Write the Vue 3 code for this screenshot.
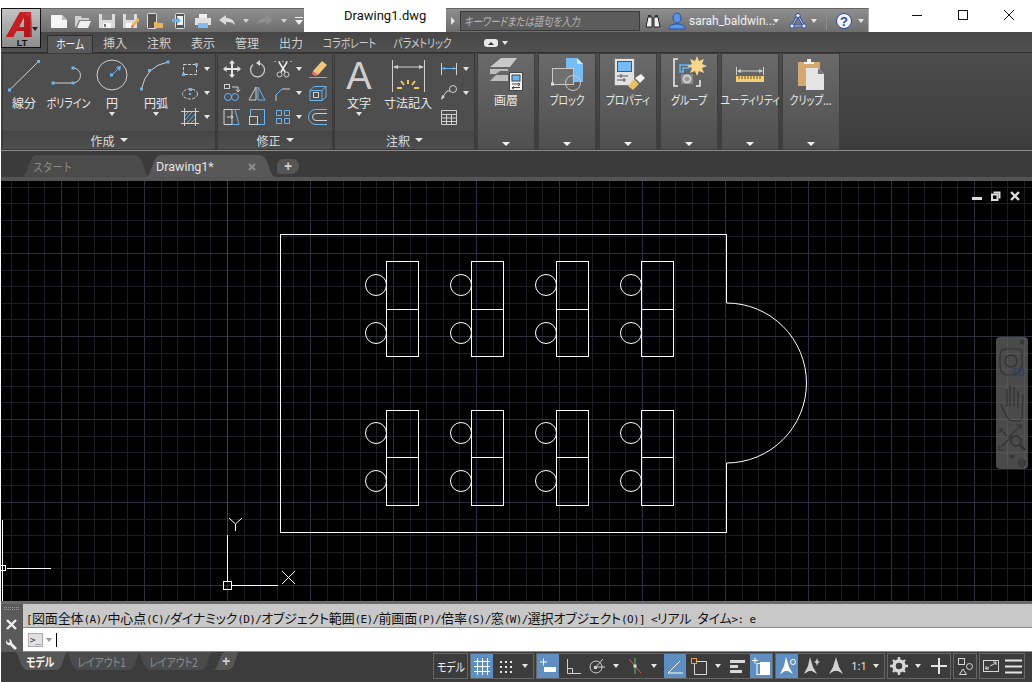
<script setup>
// Grille du canevas : origine du SCU en (227, 585), pas de 16,6 px
const STEP = 16.6
const gridX = []
for (let i = -13; 227.5 + i * STEP < 1033; i++) {
  gridX.push({ pos: Math.floor(227.5 + i * STEP) + 0.5, major: i % 5 === 0 })
}
const gridY = []
for (let i = -24; i < 2; i++) {
  gridY.push({ pos: Math.floor(585.5 + i * STEP) + 0.5, major: i % 5 === 0 })
}

// Tables et chaises du plan
const deskCols = [386.5, 471.5, 556.5, 641.5]
const deskRows = [
  { top: 261.5, mid: 309.5, bottom: 356.5, c1: 285, c2: 333 },
  { top: 410.5, mid: 457.5, bottom: 505.5, c1: 433, c2: 481 }
]

const tabs = ['挿入', '注釈', '表示', '管理', '出力']

// Historique : le latin et le japonais n'ont pas la même chasse
const history = '[図面全体(A)/中心点(C)/ダイナミック(D)/オブジェクト範囲(E)/前画面(P)/倍率(S)/窓(W)/選択オブジェクト(O)] <リアル タイム>: e'
const historyRuns = history.match(/[\x00-\x7f]+|[^\x00-\x7f]+/g).map((text) => ({
  text,
  latin: /^[\x00-\x7f]/.test(text)
}))
</script>

<template>
  <div class="app">
    <!-- Bouton application, par-dessus la barre d'onglets -->
    <div class="app-button">
      <svg width="38" height="38" viewBox="2 9 38 38">
        <defs>
          <linearGradient id="redA" x1="0" y1="0" x2="1" y2="1">
            <stop offset="0" stop-color="#d8262c" />
            <stop offset="1" stop-color="#a0161b" />
          </linearGradient>
        </defs>
        <path d="M6 37 L20 12 H31 L32 37 H24 V31 H16.500 L13 37 Z M19 27 H24 V17 Z" fill="url(#redA)" fill-rule="evenodd" />
        <path d="M20 12 L24 14 V17 L13 37 H6 Z" fill="#c41f25" />
        <path d="M24 14 L31 12 L32 37 H30 V17 Z" fill="#e2383c" opacity=".6" />
        <path d="M32 27 H38 L35 31 Z" fill="#222" />
        <text x="22" y="46" text-anchor="middle" class="lt">LT</text>
      </svg>
    </div>

    <header class="title-bar">
      <div class="qat">
        <svg class="qi" viewBox="0 0 16 16"><path d="M0 2H11L16 7V15H0Z" fill="#f4f4f4" /><path d="M11 2V7H16" fill="#bbb" /></svg>
        <svg class="qi" viewBox="0 0 16 16"><path d="M0 14V3H6L7 5H14V7H4L1 14Z" fill="#cfcfcf" /><path d="M2 15L5 8H16L13 15Z" fill="#f0f0f0" /></svg>
        <svg class="qi" viewBox="0 0 16 16"><path d="M0 1H16V15H0Z" fill="#dcdcdc" /><path d="M3 1H13V7H3Z" fill="#8d8d8d" /><path d="M4 10H12V15H4Z" fill="#f8f8f8" /><path d="M5 11H7V14H5Z" fill="#777" /></svg>
        <svg class="qi" viewBox="0 0 16 16"><path d="M0 1H14V15H0Z" fill="#dcdcdc" /><path d="M3 1H11V7H3Z" fill="#8d8d8d" /><path d="M3 10H9V15H3Z" fill="#f8f8f8" /><path d="M8 14L9 11L15 5L17 7L11 13Z" fill="#e8b45c" /><path d="M8 15L9 12L11 14Z" fill="#e2574c" /></svg>
        <svg class="qi" viewBox="0 0 16 16"><rect x="0.5" y="0.5" width="9" height="15" rx="1" fill="#555" stroke="#ddd" /><path d="M7 9H10L11 10H16V15H7Z" fill="#e8b45c" /></svg>
        <svg class="qi" viewBox="0 0 16 16"><rect x="4.5" y="0.5" width="9" height="15" rx="1" fill="#555" stroke="#ddd" /><rect x="6" y="3" width="6" height="9" fill="#f0f0f0" /><path d="M1 6H6V4L10 7.5L6 11V9H1Z" fill="#63b5f0" /></svg>
        <svg class="qi" viewBox="0 0 16 16"><path d="M4 1H12V5H4Z" fill="#f0f0f0" /><path d="M0 5H16V12H13V10H3V12H0Z" fill="#e0e0e0" /><path d="M3 10H13V15H3Z" fill="#7fbdf0" /></svg>
        <svg class="qi" viewBox="0 0 16 16"><path d="M0 7L7 2V5C12 5 15 7 16 12C13 9 11 9 7 9V12Z" fill="#dcdcdc" /></svg>
        <i class="caret cq"></i>
        <svg class="qi" viewBox="0 0 16 16"><path d="M16 7L9 2V5C4 5 1 7 0 12C3 9 5 9 9 9V12Z" fill="#8e8e8e" /></svg>
        <i class="caret cq"></i>
        <svg class="qc" width="8" height="10" viewBox="0 0 8 10"><path d="M0 1H8V2H0ZM0 4H8L4 9Z" fill="#eee" /></svg>
      </div>

      <div class="doc-title">Drawing1.dwg</div>

      <div class="search-bar">
        <span class="search-arrow"></span>
        <div class="search-input"><span class="nk-left slim">キーワードまたは語句を入力</span></div>
        <svg class="binoc" width="16" height="16" viewBox="0 0 16 16"><path d="M1 14L3 4H7V14ZM9 14V4H13L15 14Z" fill="#f2f2f2" stroke="#222" /><path d="M3 2H6V4H3ZM10 2H13V4H10Z" fill="#333" /></svg>
        <svg class="user" width="18" height="18" viewBox="0 0 18 18"><ellipse cx="9" cy="6" rx="4" ry="5" fill="#5b95e8" stroke="#2b4f9e" /><path d="M1 17C1 13 5 12 9 12S17 13 17 17Z" fill="#5b95e8" stroke="#2b4f9e" /></svg>
        <span class="user-name">sarah_baldwin...</span>
        <i class="caret"></i>
        <svg class="net" width="18" height="18" viewBox="0 0 18 18">
          <path d="M9 3.500L15 14H3Z" fill="none" stroke="#2d4a9e" stroke-width="2.600" />
          <path d="M9 3.500L15 14H3Z" fill="none" stroke="#dfe6fa" stroke-width="0.900" />
          <circle cx="9" cy="3.500" r="2.200" fill="#dfe6fa" stroke="#2d4a9e" />
          <circle cx="15" cy="14" r="2.200" fill="#dfe6fa" stroke="#2d4a9e" />
          <circle cx="3" cy="14" r="2.200" fill="#dfe6fa" stroke="#2d4a9e" />
        </svg>
        <i class="caret c-net"></i>
        <span class="bar-sep"></span>
        <svg class="help" width="16" height="16" viewBox="0 0 16 16"><circle cx="8" cy="8" r="7.500" fill="#f2f4fa" stroke="#2d4a9e" /><text x="8" y="12.500" text-anchor="middle" class="help-q">?</text></svg>
        <i class="caret"></i>
      </div>

      <div class="win-controls">
        <button class="win-btn"><svg width="10" height="10" viewBox="0 0 10 10"><path d="M0 5.500H10" stroke="#111" /></svg></button>
        <button class="win-btn"><svg width="10" height="10" viewBox="0 0 10 10"><rect x=".5" y=".5" width="9" height="9" fill="none" stroke="#111" /></svg></button>
        <button class="win-btn"><svg width="10" height="10" viewBox="0 0 10 10"><path d="M0 0L10 10M10 0L0 10" stroke="#111" /></svg></button>
      </div>
    </header>

    <nav class="ribbon-tabs">
      <span class="rtab active"><span class="nk">ホーム</span></span>
      <span v-for="tab in tabs" :key="tab" class="rtab">{{ tab }}</span>
      <span class="rtab wide"><span class="nk">コラボレート</span></span>
      <span class="rtab wider"><span class="nk">パラメトリック</span></span>
      <span class="pill"><i class="pill-up"></i></span>
      <i class="caret"></i>
    </nav>

    <section class="ribbon">
      <!-- Panneau Création -->
      <div class="panel p-draw">
        <div class="panel-body">
          <div class="tool w44">
            <svg width="44" height="40" viewBox="2 56 44 40">
              <path d="M9.500 90L38.500 61.500" class="ln" />
              <rect x="8" y="88.500" width="3" height="3" class="grip" /><rect x="37" y="60" width="3" height="3" class="grip" />
            </svg>
            <span class="label">線分</span>
          </div>
          <div class="tool w44">
            <svg width="44" height="40" viewBox="46 56 44 40">
              <path d="M53 83H73A7.500 7.500 0 0 0 73 68" class="ln" />
              <rect x="51.500" y="81.500" width="3" height="3" class="grip" /><rect x="71.500" y="81.500" width="3" height="3" class="grip" /><rect x="71.500" y="66.500" width="3" height="3" class="grip" />
            </svg>
            <span class="label nk">ポリライン</span>
          </div>
          <div class="tool w44">
            <svg width="44" height="40" viewBox="90 56 44 40">
              <circle cx="112" cy="75" r="15" class="ln" />
              <path d="M112 75L120 67" stroke="#6ab4ef" fill="none" /><path d="M121 66L116 67L120 71Z" fill="#6ab4ef" />
              <rect x="110" y="73.500" width="3" height="3" class="grip" />
            </svg>
            <span class="label">円</span>
            <i class="caret tool-caret"></i>
          </div>
          <div class="tool w44">
            <svg width="44" height="40" viewBox="134 56 44 40">
              <path d="M141.500 89Q146 66 168 62" class="ln" />
              <rect x="140" y="87.500" width="3" height="3" class="grip" /><rect x="148" y="69" width="3" height="3" class="grip" /><rect x="166.500" y="60.500" width="3" height="3" class="grip" />
            </svg>
            <span class="label">円弧</span>
            <i class="caret tool-caret"></i>
          </div>
          <div class="small-col">
            <div class="small-row">
              <svg class="si" viewBox="0 0 20 20"><rect x="3.500" y="5.500" width="13" height="10" class="ln dash" /><rect x="2" y="14" width="3" height="3" class="grip" /><rect x="15" y="4" width="3" height="3" class="grip" /></svg>
              <i class="caret"></i>
            </div>
            <div class="small-row">
              <svg class="si" viewBox="0 0 20 20"><ellipse cx="10" cy="11" rx="7.500" ry="5" class="ln dash" /><rect x="9" y="5" width="3" height="3" class="grip" /><rect x="9" y="10" width="2" height="2" class="grip" /></svg>
              <i class="caret"></i>
            </div>
            <div class="small-row">
              <svg class="si" viewBox="0 0 20 20"><path d="M1 4.500H19M1 16.500H19M4.500 1V19M15.500 1V19" class="ln" /><path d="M5 13L12 5M7 16L15 7M11 16L15 12M5 9L8 5" stroke="#6ab4ef" fill="none" /></svg>
              <i class="caret"></i>
            </div>
          </div>
        </div>
        <div class="panel-title"><span>作成</span><i class="caret title-caret"></i></div>
      </div>

      <!-- Panneau Modification -->
      <div class="panel p-modify">
        <div class="panel-body modify-grid">
          <svg class="si" viewBox="0 0 20 20"><path d="M10 1L13 4.500H11V9H15.500V7L19 10L15.500 13V11H11V15.500H13L10 19L7 15.500H9V11H4.500V13L1 10L4.500 7V9H9V4.500H7Z" fill="#e4e4e4" /></svg>
          <svg class="si" viewBox="0 0 20 20"><path d="M6 5.500A7 7 0 1 0 12 4" class="ln" stroke-width="1.200" /><path d="M13 1L9 4L13 7Z" fill="#dcdcdc" /></svg>
          <div class="mcell">
            <svg class="si" viewBox="0 0 20 20"><path d="M1 2.500H19" stroke="#6ab4ef" stroke-dasharray="2 2" /><path d="M6 3L12 13M14 3L8 13" stroke="#e8e8e8" stroke-width="1.600" /><circle cx="6.500" cy="15.500" r="2.500" class="ln" /><circle cx="13.500" cy="15.500" r="2.500" class="ln" /></svg>
            <i class="caret"></i>
          </div>
          <svg class="si" viewBox="0 0 20 20"><path d="M5 12L14 2L19 6L10 16L6 16Z" fill="#f2c57a" /><path d="M5 12L10 16L7 17L4 15Z" fill="#e8706a" /><path d="M1 18.500H19" stroke="#6ab4ef" /></svg>

          <svg class="si" viewBox="0 0 20 20"><rect x="2.500" y="1.500" width="5" height="4" class="ln" /><path d="M10 4H16V8M14 6.500L16 9L18 6.500" class="ln" /><circle cx="6" cy="14" r="3.500" stroke="#6ab4ef" fill="none" /><circle cx="13" cy="14" r="3.500" stroke="#6ab4ef" fill="none" /></svg>
          <svg class="si" viewBox="0 0 20 20"><path d="M9 4V17H2Z" class="ln" /><path d="M11 4V17H18Z" stroke="#6ab4ef" fill="none" /></svg>
          <div class="mcell">
            <svg class="si" viewBox="0 0 20 20"><path d="M3 18V12L9 6H17" class="ln" /><path d="M3 12L9 6" stroke="#6ab4ef" /></svg>
            <i class="caret"></i>
          </div>
          <svg class="si" viewBox="0 0 20 20"><path d="M2 7.500L6 3.500H18V14L14 17.500H2Z M14 7.500V17.500 M2 7.500H14 M14 7.500L18 3.500" stroke="#6ab4ef" fill="none" /><rect x="5.500" y="9.500" width="5" height="5" class="ln" /></svg>

          <svg class="si" viewBox="0 0 20 20"><path d="M2 2.500H10V17.500H2Z" class="ln" /><path d="M10 2.500L18 2.500M13 2.500L17 17.500H10" stroke="#6ab4ef" fill="none" /><path d="M5 10H11M9 8L11 10L9 12" class="ln" /></svg>
          <svg class="si" viewBox="0 0 20 20"><path d="M3.500 9.500V2.500H17.500V17.500H10.500" stroke="#6ab4ef" fill="none" /><rect x="2.500" y="9.500" width="8" height="8" class="ln" /></svg>
          <div class="mcell">
            <svg class="si" viewBox="0 0 20 20"><path d="M3.500 3.500H8.500V8.500H3.500ZM11.500 3.500H16.500V8.500H11.500ZM3.500 11.500H8.500V16.500H3.500ZM11.500 11.500H16.500V16.500H11.500Z" stroke="#6ab4ef" fill="none" /></svg>
            <i class="caret"></i>
          </div>
          <svg class="si" viewBox="0 0 20 20"><path d="M19 2.500H8A5 5 0 0 0 8 17.500H19" stroke="#6ab4ef" fill="none" /><path d="M19 6.500H8A3 3 0 0 0 8 13.500H19" class="ln" /></svg>
        </div>
        <div class="panel-title"><span>修正</span><i class="caret title-caret"></i></div>
      </div>

      <!-- Panneau Annotation -->
      <div class="panel p-annot">
        <div class="panel-body">
          <div class="tool w50">
            <div class="big-a">A</div>
            <span class="label">文字</span>
            <i class="caret tool-caret"></i>
          </div>
          <div class="tool w48">
            <svg width="48" height="40" viewBox="0 0 48 40">
              <path d="M8.500 4V36M40.500 4V36M10 11H39" class="ln" />
              <path d="M9 11L14 9V13ZM40 11L35 9V13Z" fill="#d0d0d0" />
              <path d="M24 24V28M17 25L20 29M31 25L28 29M13 32H18M30 32H35" stroke="#f0c860" stroke-width="2" />
            </svg>
            <span class="label">寸法記入</span>
          </div>
          <div class="small-col annot-col">
            <div class="small-row">
              <svg class="si" viewBox="0 0 20 20"><path d="M2.500 4V16M17.500 4V16" class="ln" /><path d="M3 9.500H17" stroke="#6ab4ef" /><path d="M3 9.500L6 8V11ZM17 9.500L14 8V11Z" fill="#6ab4ef" /></svg>
              <i class="caret"></i>
            </div>
            <div class="small-row">
              <svg class="si" viewBox="0 0 20 20"><circle cx="14" cy="6" r="3.500" class="ln" /><path d="M11 8H8L3 15" class="ln" /><path d="M2 17L3 12L6 14Z" fill="#d0d0d0" /></svg>
              <i class="caret"></i>
            </div>
            <div class="small-row">
              <svg class="si" viewBox="0 0 20 20"><path d="M2.500 3.500H17.500V17.500H2.500ZM2.500 7.500H17.500M2.500 11H17.500M2.500 14.500H17.500M7.500 7.500V17.500M12.500 7.500V17.500" class="ln" /></svg>
            </div>
          </div>
        </div>
        <div class="panel-title"><span>注釈</span><i class="caret title-caret"></i></div>
      </div>

      <!-- Panneaux réduits -->
      <div class="mini">
        <svg class="mi" viewBox="0 0 40 36">
          <path d="M15 2H31L24 11H4Z" fill="#c9c9c9" /><path d="M4 13H22V15H14L10 18H4Z" fill="#bcbcbc" /><path d="M10 19H22V25H4Z" fill="#bcbcbc" />
          <rect x="23.500" y="16.500" width="13" height="18" fill="#f2f2f2" stroke="#444" /><rect x="26" y="19" width="8" height="6" fill="#67b5f2" stroke="#444" />
          <path d="M26 28H34M32 27L34 28.500L32 30M34 31.500H26M28 30.500L26 32L28 33" stroke="#444" fill="none" />
        </svg>
        <span class="label">画層</span>
        <i class="caret mini-caret"></i>
      </div>
      <div class="mini">
        <svg class="mi" viewBox="0 0 40 36">
          <path d="M19 2H30L36 8V26H19Z" fill="#76bdf6" /><path d="M30 2V8H36Z" fill="#cfe7fb" />
          <rect x="5.500" y="12.500" width="21" height="16" fill="#707070" stroke="#c8c8c8" />
          <circle cx="26" cy="27" r="7.500" fill="none" stroke="#c8c8c8" />
          <rect x="4" y="26.500" width="3" height="3" fill="#ddd" />
        </svg>
        <span class="label nk">ブロック</span>
        <i class="caret mini-caret"></i>
      </div>
      <div class="mini">
        <svg class="mi" viewBox="0 0 40 36">
          <rect x="6.500" y="2.500" width="20" height="27" fill="#e2e2e2" stroke="#777" />
          <rect x="9.500" y="5.500" width="14" height="10" fill="#74bcf6" stroke="#555" />
          <path d="M9 20H20M9 24H18M13 18V22M16 22V26" stroke="#555" fill="none" />
          <path d="M20 30L26 23L31 28L25 34Z" fill="#e9c264" /><path d="M27 22L33 18L37 22L32 27Z" fill="#f2f2f2" />
        </svg>
        <span class="label nk">プロパティ</span>
        <i class="caret mini-caret"></i>
      </div>
      <div class="mini">
        <svg class="mi" viewBox="0 0 40 36">
          <path d="M9 3H5V30H9M27 30H31V24" fill="none" stroke="#f0f0f0" stroke-width="1.500" />
          <path d="M11 9H20V12H14V16H11Z" fill="none" stroke="#63b5f0" stroke-width="1.500" />
          <rect x="12" y="18" width="12" height="10" fill="#888" /><circle cx="18" cy="23" r="3.500" fill="#9a9a9a" stroke="#cfcfcf" stroke-width="2" />
          <path d="M28 0L30 5L35 3L33 8L38 10L33 12L35 17L30 15L28 20L26 15L21 17L23 12L18 10L23 8L21 3L26 5Z" fill="#f5d78c" />
        </svg>
        <span class="label nk">グループ</span>
        <i class="caret mini-caret"></i>
      </div>
      <div class="mini">
        <svg class="mi" viewBox="0 0 40 36">
          <path d="M6.500 11V19M33.500 11V19M8 15H32" stroke="#d0d0d0" fill="none" />
          <path d="M7 15L11 13V17ZM33 15L29 13V17Z" fill="#d0d0d0" />
          <rect x="6" y="20" width="28" height="6" fill="#f3cf78" />
          <path d="M9 20V23M12 20V23M15 20V23M18 20V23M21 20V23M24 20V23M27 20V23M30 20V23" stroke="#6e5a24" />
        </svg>
        <span class="label nk">ユーティリティ</span>
        <i class="caret mini-caret"></i>
      </div>
      <div class="mini">
        <svg class="mi" viewBox="0 0 40 36">
          <rect x="7" y="6" width="22" height="24" fill="#d5a871" />
          <path d="M13 6H16V3H20V6H23V8H13Z" fill="#f0f0f0" />
          <path d="M15 12H27L33 18V34H15Z" fill="#e4e4e4" /><path d="M27 12L33 18H27Z" fill="#777" />
        </svg>
        <span class="label nk">クリップ...</span>
        <i class="caret mini-caret"></i>
      </div>
    </section>

    <!-- Onglets de documents -->
    <div class="doc-tabs">
      <div class="doc-tab start">
        <svg class="tab-shape" width="128" height="22" viewBox="0 0 128 22"><path d="M0 22C6 22 6 0 15 0H113C122 0 122 22 128 22Z" fill="#4b4b4b" /></svg>
        <span class="doc-label dim"><span class="nk-left">スタート</span></span>
      </div>
      <div class="doc-tab current">
        <svg class="tab-shape" width="130" height="22" viewBox="0 0 130 22"><path d="M0 22C6 22 6 0 15 0H113C124 0 122 22 130 22Z" fill="#585858" /></svg>
        <span class="doc-label">Drawing1*</span>
        <svg class="doc-close" width="8" height="8" viewBox="0 0 8 8"><path d="M1 1L7 7M7 1L1 7" stroke="#8e8e8e" stroke-width="2" /></svg>
      </div>
      <div class="doc-plus">+</div>
    </div>

    <!-- Zone de dessin -->
    <main class="canvas">
      <svg class="drawing" width="1031" height="420" viewBox="1 181 1031 420">
        <g shape-rendering="crispEdges">
          <path v-for="g in gridX" :key="'x' + g.pos" :d="`M${g.pos} 181V601`" :stroke="g.major ? '#2e2e42' : '#1d1d24'" />
          <path v-for="g in gridY" :key="'y' + g.pos" :d="`M1 ${g.pos}H1033`" :stroke="g.major ? '#2e2e42' : '#1d1d24'" />
          <path d="M227.500 181V535" stroke="#1f5c1f" />
          <path d="M278 585.500H1033" stroke="#5c1f1f" />
          <path d="M227.500 535V581M232 585.500H278" stroke="#fff" />
          <rect x="223.500" y="581.500" width="8" height="8" fill="none" stroke="#fff" />
          <path d="M2.500 520V601M7 568.500H51" stroke="#fff" />
          <rect x="0.500" y="565.500" width="5" height="5" fill="none" stroke="#fff" />
        </g>
        <g fill="none" stroke="#fff">
          <path d="M229 518L235.500 524L242 518M235.500 524V531" />
          <path d="M282 571L295 584M295 571L282 584" />
          <path d="M726.500 303V234.500H280.500V532.500H726.500V463" shape-rendering="crispEdges" />
          <path d="M726.500 303A80 80 0 0 1 726.500 463" />
          <g v-for="row in deskRows" :key="row.top">
            <g v-for="x in deskCols" :key="x">
              <path :d="`M${x} ${row.top}H${x + 32}V${row.bottom}H${x}ZM${x} ${row.mid}H${x + 32}`" shape-rendering="crispEdges" />
              <circle :cx="x - 10.5" :cy="row.c1" r="10.500" />
              <circle :cx="x - 10.5" :cy="row.c2" r="10.500" />
            </g>
          </g>
        </g>
      </svg>

      <div class="vp-controls">
        <svg width="10" height="10" viewBox="0 0 10 10"><rect x="0" y="6" width="10" height="3" fill="#ddd" /></svg>
        <svg width="10" height="10" viewBox="0 0 10 10"><path d="M2.500 .5H9.500V7.500H7.500V2.500H2.500Z" fill="#ddd" /><rect x="1" y="3.500" width="5.500" height="5.500" fill="none" stroke="#ddd" stroke-width="2" /></svg>
        <svg width="10" height="10" viewBox="0 0 10 10"><path d="M1 1L9 9M9 1L1 9" stroke="#ddd" stroke-width="2.400" /></svg>
      </div>

      <div class="nav-bar">
        <svg width="32" height="132" viewBox="0 0 32 132">
          <g fill="none" stroke="#333">
            <path d="M24 3L28 7M28 3L24 7" stroke-width="1.500" />
            <path d="M10 12H22A4 4 0 0 1 26 16V28A10 10 0 0 1 16 38H12A8 8 0 0 1 4 30V18A6 6 0 0 1 10 12Z" stroke-width="1.200" />
            <circle cx="15" cy="24" r="6" stroke-width="1.200" />
            <path d="M9 76C6 72 7 70 5 67M11 70V52M14 69V48M18 69V50M22 71V54M26 70C27 66 27 62 27 58M9 76C12 83 14 84 18 84H23C26 84 27 78 26 70" stroke-width="1.200" />
            <path d="M5 93L11 99M13 100L24 89M5 110L16 99M8 92H4V96M20 88H25V92M3 108V113H8" stroke-width="1.200" />
            <circle cx="20" cy="104" r="5" stroke-width="1.500" />
            <path d="M24 108L29 113" stroke-width="2.500" />
            <circle cx="26" cy="126" r="3.500" />
            <path d="M23 125H29M23 127H29" />
          </g>
          <path d="M13 118H19L16 122Z" fill="#333" />
          <text x="22" y="39" text-anchor="middle" class="two-d">2D</text>
        </svg>
      </div>
    </main>

    <!-- Ligne de commande -->
    <section class="command">
      <div class="cmd-side">
        <svg width="21" height="48" viewBox="0 0 21 48">
          <path d="M3 3.500H18M3 5.500H18" stroke="#9a9a9a" stroke-dasharray="1 1" fill="none" />
          <path d="M6 16L15 25M15 16L6 25" stroke="#f0f0f0" stroke-width="2.400" />
          <path d="M5 38A3 3 0 0 0 9 41L14 46L16 44L11 39A4 4 0 0 0 8 35L9 38L7 39L5 36Z" fill="#f0f0f0" />
        </svg>
      </div>
      <div class="cmd-main">
        <div class="cmd-history">
          <span v-for="(run, i) in historyRuns" :key="i" :class="run.latin ? 'run-latin' : 'run-cjk'">{{ run.text }}</span>
        </div>
        <div class="cmd-input">
          <span class="cmd-icon">&gt;_</span>
          <i class="caret ci"></i>
          <span class="cursor"></span>
        </div>
      </div>
    </section>

    <!-- Barre d'état -->
    <footer class="status">
      <div class="layout-tabs">
        <div class="ltab first">
          <svg class="tab-shape" width="52" height="18" viewBox="0 0 52 18"><path d="M0 0C4 0 5 18 12 18H42C48 18 48 4 52 0Z" fill="#565656" /></svg>
          <span class="ltab-label on nk">モデル</span>
        </div>
        <div class="ltab">
          <svg class="tab-shape" width="74" height="18" viewBox="0 0 74 18"><path d="M0 0C4 0 5 18 12 18H62C70 18 70 4 74 0Z" fill="#4b4b4b" /></svg>
          <span class="ltab-label nk">レイアウト1</span>
        </div>
        <div class="ltab">
          <svg class="tab-shape" width="74" height="18" viewBox="0 0 74 18"><path d="M0 0C4 0 5 18 12 18H62C70 18 70 4 74 0Z" fill="#4b4b4b" /></svg>
          <span class="ltab-label nk">レイアウト2</span>
        </div>
        <div class="ltab plus">
          <svg class="tab-shape" width="24" height="18" viewBox="0 0 24 18"><path d="M0 18C5 16 5 0 12 0H24C21 6 22 18 12 18Z" fill="#565656" /></svg>
          <span class="ltab-label plus-sign">+</span>
        </div>
      </div>

      <div class="sgroup sg-model"><span class="model-text nk">モデル</span></div>

      <div class="sgroup">
        <span class="sb blue"><svg viewBox="0 0 22 24"><path d="M3 7.500H19M3 12.500H19M3 17.500H19M6.500 4V21M11.500 4V21M16.500 4V21" stroke="#fff" fill="none" /></svg></span>
        <span class="sb s2"><svg viewBox="0 0 22 24"><path d="M5 7H7V9H5ZM10 7H12V9H10ZM15 7H17V9H15ZM5 12H7V14H5ZM10 12H12V14H10ZM15 12H17V14H15ZM5 17H7V19H5ZM10 17H12V19H10ZM15 17H17V19H15Z" fill="#e4e4e4" /></svg></span>
        <span class="sc"><i class="caret"></i></span>
      </div>

      <div class="sgroup">
        <span class="sb blue"><svg viewBox="0 0 22 24"><path d="M3 8H10M6.500 4.500V11.500" stroke="#fff" /><rect x="7" y="13" width="12" height="5" fill="#fff" /></svg></span>
        <span class="sb s3"><svg viewBox="0 0 22 24"><path d="M5.500 5V19.500H19M5.500 14.500H10.500V19.500" stroke="#cfcfcf" fill="none" /></svg></span>
        <span class="sb s2"><svg viewBox="0 0 22 24"><circle cx="10" cy="13" r="6" fill="none" stroke="#cfcfcf" /><path d="M9 14L17 5M10 13H19" stroke="#cfcfcf" /><rect x="8" y="12" width="3" height="3" fill="#cfcfcf" /></svg></span>
        <span class="sc"><i class="caret"></i></span>
        <span class="sb"><svg viewBox="0 0 22 24"><path d="M5 5L17 19" stroke="#d86060" /><path d="M11 4V20" stroke="#5ac85a" /><rect x="9.500" y="10.500" width="3" height="3" fill="#ddd" /></svg></span>
        <span class="sc"><i class="caret"></i></span>
        <span class="sb blue s2"><svg viewBox="0 0 22 24"><path d="M4 19L16 7M4 19H19" stroke="#fff" fill="none" /></svg></span>
        <span class="sb s2"><svg viewBox="0 0 22 24"><rect x="3.500" y="4.500" width="5" height="5" fill="none" stroke="#e8a050" /><path d="M9 7.500H18.500V20.500H6.500V10" stroke="#d8d8d8" fill="none" /></svg></span>
        <span class="sc"><i class="caret"></i></span>
        <span class="sb"><svg viewBox="0 0 22 24"><path d="M4 6H19V9H4ZM4 11H12V14H4ZM4 16H16V19H4Z" fill="#d8d8d8" /></svg></span>
        <span class="sb blue s2"><svg viewBox="0 0 22 24"><path d="M5 3.500V9.500M2 6.500H8" stroke="#fff" /><rect x="7" y="9.500" width="10" height="11" fill="none" stroke="#fff" /><rect x="10" y="8" width="10" height="13" fill="#fff" /></svg></span>
      </div>

      <div class="sgroup">
        <span class="sb blue"><svg viewBox="0 0 22 24"><path d="M10 3L13 13L17 20L12 17H9L4 20L8 12Z" fill="#fff" /><circle cx="17" cy="8" r="2.500" fill="none" stroke="#fff" /></svg></span>
        <span class="sb s2"><svg viewBox="0 0 22 24"><path d="M10 3L13 13L17 20L12 17H9L4 20L8 12Z" fill="#d0d0d0" /><path d="M17 4L18 7L20 8L18 9L17 12L16 9L14 8L16 7Z" fill="#d0d0d0" /></svg></span>
        <span class="sb s3"><svg viewBox="0 0 22 24"><path d="M11 3L14 13L18 20L13 17H9L4 20L8 13Z" fill="#d0d0d0" /></svg></span>
        <span class="scale">1:1</span>
        <span class="sc"><i class="caret"></i></span>
      </div>

      <div class="sgroup">
        <span class="sb"><svg viewBox="0 0 22 24"><circle cx="11" cy="12" r="5" fill="none" stroke="#d8d8d8" stroke-width="3.500" /><path d="M11 3V7M11 17V21M2 12H6M16 12H20M5 6L8 9M14 15L17 18M17 6L14 9M8 15L5 18" stroke="#d8d8d8" stroke-width="2.400" /></svg></span>
        <span class="sc"><i class="caret"></i></span>
        <span class="sb s2"><svg viewBox="0 0 22 24"><path d="M3 12H19M11 4V20" stroke="#e4e4e4" stroke-width="2" /></svg></span>
      </div>

      <div class="sgroup">
        <span class="sb"><svg viewBox="0 0 22 24"><rect x="4.500" y="4.500" width="6" height="6" fill="none" stroke="#d8d8d8" /><circle cx="15.500" cy="12.500" r="3" fill="none" stroke="#d8d8d8" /><path d="M9 15L12.500 20.500H5.500Z" fill="none" stroke="#d8d8d8" /></svg></span>
      </div>

      <div class="sgroup">
        <span class="sb"><svg viewBox="0 0 22 24"><rect x="3.500" y="6.500" width="15" height="11" fill="none" stroke="#d8d8d8" /><path d="M10 12L16 9M5 15L9 13M13 8H16V11M6 12V15H9" stroke="#d8d8d8" fill="none" /></svg></span>
        <span class="sb"><svg viewBox="0 0 22 24"><path d="M3 6.500H20M3 12.500H20M3 18.500H20" stroke="#e4e4e4" stroke-width="2" /></svg></span>
      </div>
    </footer>
  </div>
</template>

<style>
html, body {
  margin: 0;
  background: #fff;
}
</style>

<style scoped>
.app {
  width: 1033px;
  height: 682px;
  padding: 0 1px;
  box-sizing: border-box;
  background: #fff;
  position: relative;
  overflow: hidden;
  font-family: "Noto Sans CJK JP", sans-serif;
  font-feature-settings: "palt";
  font-size: 12px;
}

i { display: block; }

/* Le kana de la capture est étroit : on resserre le texte horizontalement */
.nk {
  display: inline-block;
  transform: scaleX(0.82);
}
.nk-left {
  display: inline-block;
  transform: scaleX(0.82);
  transform-origin: left center;
  white-space: nowrap;
}
.nk-left.slim { transform: scaleX(0.78); }

.caret {
  width: 0;
  height: 0;
  border-left: 3.5px solid transparent;
  border-right: 3.5px solid transparent;
  border-top: 4px solid #e6e6e6;
  flex: none;
}

/* Bouton application */
.app-button {
  position: absolute;
  left: 1px;
  top: 8px;
  width: 40px;
  height: 40px;
  box-sizing: border-box;
  border: 1px solid #111;
  background: linear-gradient(#c4c4c4, #8c8c8c);
  z-index: 2;
}
.app-button svg { display: block; }
.lt {
  font: bold 9px "Liberation Sans", sans-serif;
  fill: #111;
}

/* Barre de titre */
.title-bar {
  display: flex;
  height: 32px;
  background: #fff;
}
.qat {
  margin: 8px 0 0 40px;
  width: 263px;
  height: 24px;
  box-sizing: border-box;
  padding-left: 10px;
  display: flex;
  align-items: center;
  gap: 8px;
  background: linear-gradient(#8f8f8f, #6d6d6d);
  border-top: 1px solid #666;
}
.qi { width: 16px; height: 16px; flex: none; }
.qc { flex: none; }
.cq { border-top-color: #cfcfcf; border-left-width: 3px; border-right-width: 3px; }

.doc-title {
  margin-left: 40px;
  width: 102px;
  flex: none;
  color: #111;
  font: 13px/32px Roboto, sans-serif;
}

.search-bar {
  margin-top: 8px;
  width: 423px;
  height: 24px;
  flex: none;
  box-sizing: border-box;
  display: flex;
  align-items: center;
  background: linear-gradient(#8f8f8f, #6d6d6d);
  border-top: 1px solid #666;
  border-right: 1px solid #aaa;
}
.search-bar > * { flex: none; }
.search-arrow {
  width: 0;
  height: 0;
  margin: 0 5px 0 5px;
  border-top: 4px solid transparent;
  border-bottom: 4px solid transparent;
  border-left: 4px solid #e4e4e4;
}
.search-input {
  width: 180px;
  height: 20px;
  box-sizing: border-box;
  border: 1px solid #3a3a3a;
  background: #5c5c5c;
  color: #b4b4b4;
  font-style: italic;
  line-height: 18px;
  padding-left: 3px;
  font-size: 12px;
  overflow: hidden;
}
.binoc { margin-left: 5px; }
.user { margin-left: 7px; }
.user-name {
  margin-left: 3px;
  width: 84px;
  color: #f0f0f0;
  font: 12px Roboto, sans-serif;
  white-space: nowrap;
}
.net { margin-left: 10px; }
.c-net { margin-left: 4px; }
.bar-sep {
  width: 1px;
  height: 18px;
  background: #8f8f8f;
  margin: 0 9px 0 9px;
}
.help { margin-right: 6px; }
.help-q {
  font: bold 13px "Liberation Sans", sans-serif;
  fill: #2d4a9e;
}

.win-controls {
  margin-left: auto;
  display: flex;
}
.win-btn {
  width: 46px;
  height: 30px;
  border: 0;
  padding: 0;
  background: none;
  display: flex;
  align-items: center;
  justify-content: center;
}

/* Onglets du ruban */
.ribbon-tabs {
  height: 20px;
  display: flex;
  align-items: flex-end;
  padding-left: 46px;
  background: linear-gradient(#474747, #505050);
  border-bottom: 1px solid #2f2f2f;
}
.rtab {
  width: 44px;
  height: 17px;
  line-height: 16px;
  text-align: center;
  color: #cfcfcf;
  white-space: nowrap;
  font-size: 12px;
}
.rtab.active {
  width: 46px;
  box-sizing: border-box;
  background: #585858;
  color: #f2f2f2;
  border: 1px solid #2f2f2f;
  border-bottom: 0;
  margin-bottom: -1px;
  height: 18px;
}
.rtab.wide { width: 72px; }
.rtab.wider { width: 76px; }
.pill {
  width: 14px;
  height: 8px;
  margin: 0 4px 5px 23px;
  background: #e8e8e8;
  border-radius: 3px;
  display: flex;
  align-items: center;
  justify-content: center;
}
.pill-up {
  width: 0;
  height: 0;
  border-left: 3px solid transparent;
  border-right: 3px solid transparent;
  border-bottom: 3px solid #333;
}
.ribbon-tabs > .caret { margin-bottom: 7px; }

/* Ruban */
.ribbon {
  height: 97px;
  display: flex;
  padding-left: 1px;
  background: linear-gradient(#4d4d4d, #3c3c3c);
  border-bottom: 1px solid #8a8a8a;
}
.panel {
  display: flex;
  flex-direction: column;
  background: #4e4e4e;
  box-shadow: inset 0 0 0 1px #3a3a3a;
}
.p-draw { width: 214px; margin-right: 1px; }
.p-modify { width: 116px; margin-right: 1px; }
.p-annot { width: 141px; margin-right: 2px; }
.panel-body {
  height: 78px;
  display: flex;
  padding-top: 3px;
  box-sizing: border-box;
}
.panel-title {
  height: 18px;
  margin: 0 1px;
  background: linear-gradient(#464646, #4f4f4f);
  color: #dcdcdc;
  display: flex;
  align-items: center;
  justify-content: center;
  gap: 5px;
}
.panel-title span {
  line-height: 18px;
  position: relative;
  top: 0.500px;
}
.title-caret { border-left-width: 4px; border-right-width: 4px; border-top-width: 4px; }

.tool {
  display: flex;
  flex-direction: column;
  align-items: center;
  flex: none;
}
.w44 { width: 44px; }
.w50 { width: 50px; }
.w48 { width: 48px; }
.label {
  color: #e8e8e8;
  line-height: 14px;
  height: 14px;
  white-space: nowrap;
  font-size: 12px;
  flex: none;
}
.tool-caret { margin-top: 2px; }

.ln {
  fill: none;
  stroke: #d0d0d0;
}
.dash { stroke-dasharray: 3 1.500; }
.grip { fill: #6ab4ef; }

.small-col {
  display: flex;
  flex-direction: column;
  padding: 1px 0 0 2px;
}
.small-row {
  height: 24px;
  display: flex;
  align-items: center;
  gap: 4px;
}
.si { width: 20px; height: 20px; flex: none; }

.modify-grid {
  display: grid;
  grid-template-columns: 25px 25px 38px 22px;
  grid-auto-rows: 24px;
  align-items: center;
  justify-items: center;
  padding: 4px 0 0 2px;
}
.mcell {
  display: flex;
  align-items: center;
  gap: 3px;
  justify-self: start;
  margin-left: 4px;
}
.big-a {
  height: 40px;
  font: 38px/40px "Liberation Sans", sans-serif;
  color: #cfcfcf;
}
.annot-col { padding-left: 7px; }

.mini {
  width: 58px;
  margin-right: 3px;
  box-sizing: border-box;
  padding: 3px 0 4px;
  display: flex;
  flex-direction: column;
  align-items: center;
  background: linear-gradient(#6a6a6a, #4f4f4f);
  box-shadow: inset 0 0 0 1px #3f3f3f;
}
.mi { width: 40px; height: 36px; flex: none; }
.mini .label { margin-top: 1px; }
.mini-caret { margin-top: auto; border-left-width: 4px; border-right-width: 4px; border-top-color: #f2f2f2; }

/* Onglets de documents */
.doc-tabs {
  height: 22px;
  padding: 4px 0 0 21px;
  background: #3b3b3b;
  border-bottom: 4px solid #555;
  display: flex;
}
.tab-shape {
  position: absolute;
  left: 0;
  top: 0;
}
.doc-tab {
  position: relative;
  height: 22px;
  display: flex;
  align-items: center;
}
.doc-tab.start { width: 128px; }
.doc-tab.current { width: 130px; margin-left: -4px; }
.doc-label {
  position: relative;
  color: #e4e4e4;
  padding-left: 10px;
  font: 12.500px Roboto, sans-serif;
}
.doc-tab.start .doc-label {
  padding-left: 11px;
  font: 12px "Noto Sans CJK JP", sans-serif;
}
.doc-label.dim { color: #8a8a8a; }
.doc-close {
  position: absolute;
  left: 102px;
  top: 8px;
}
.doc-plus {
  width: 22px;
  height: 15px;
  margin: 4px 0 0 1px;
  background: #555;
  border-radius: 6px 6px 8px 2px;
  color: #cfcfcf;
  text-align: center;
  font: bold 14px/15px "Liberation Sans", sans-serif;
}

/* Canevas */
.canvas {
  position: relative;
  height: 420px;
  background: #000;
  overflow: hidden;
}
.drawing { display: block; }
.vp-controls {
  position: absolute;
  top: 10px;
  right: 12px;
  display: flex;
  gap: 9px;
}
.nav-bar {
  position: absolute;
  left: 995px;
  top: 156px;
  width: 32px;
  height: 132px;
  background: rgba(120, 120, 120, 0.62);
  border-radius: 4px;
}
.nav-bar svg { display: block; }
.two-d {
  font: bold 11px "Liberation Sans", sans-serif;
  fill: #33415c;
}

/* Ligne de commande */
.command {
  height: 48px;
  display: flex;
  border-top: 3px solid #6a6a6a;
  background: #555;
}
.cmd-side {
  width: 22px;
  background: #5a5a5a;
  flex: none;
}
.cmd-side svg { display: block; }
.cmd-main {
  flex: 1;
  display: flex;
  flex-direction: column;
}
.cmd-history {
  height: 24px;
  background: #c8c8c8;
  color: #111;
  padding-left: 3px;
  line-height: 27px;
  white-space: nowrap;
  border-bottom: 1px solid #8a8a8a;
  box-sizing: border-box;
  overflow: hidden;
}
.run-cjk {
  font-family: "Noto Sans CJK JP", sans-serif;
  font-size: 13px;
  letter-spacing: -0.15px;
}
.run-latin {
  font-family: "DejaVu Sans Mono", monospace;
  font-size: 11px;
  letter-spacing: -0.62px;
  white-space: pre;
}
.cmd-input {
  height: 24px;
  box-sizing: border-box;
  background: #fff;
  display: flex;
  align-items: center;
  padding-left: 5px;
  border-bottom: 1px solid #8a8a8a;
}
.cmd-icon {
  width: 15px;
  height: 14px;
  box-sizing: border-box;
  border: 1px solid #aaa;
  background: #e0e0e0;
  color: #333;
  font: 9px/12px "DejaVu Sans Mono", monospace;
  text-align: center;
}
.ci {
  margin-left: 3px;
  border-top-color: #999;
  border-left-width: 3px;
  border-right-width: 3px;
}
.cursor {
  width: 1px;
  height: 14px;
  margin-left: 4px;
  background: #000;
}

/* Barre d'état */
.status {
  height: 30px;
  display: flex;
  background: #3c3c3c;
}
.layout-tabs {
  width: 432px;
  flex: none;
  display: flex;
  padding-left: 14px;
  box-sizing: border-box;
}
.ltab {
  position: relative;
  width: 72px;
  height: 18px;
  display: flex;
  align-items: center;
  justify-content: center;
}
.ltab.first { width: 51px; }
.ltab.plus { width: 24px; margin-left: 4px; }
.ltab-label {
  position: relative;
  color: #8e8e8e;
  font-size: 12px;
  white-space: nowrap;
}
.ltab-label.on { color: #f4f4f4; font-weight: 700; }
.plus-sign {
  color: #cfcfcf;
  font: bold 14px "Liberation Sans", sans-serif;
}

.sgroup {
  height: 26px;
  margin: 1px 2px 0 0;
  box-sizing: border-box;
  border: 1px solid #666;
  display: flex;
  align-items: stretch;
  flex: none;
}
.sg-model { width: 35px; justify-content: center; align-items: center; }
.model-text {
  color: #f0f0f0;
  font-size: 12px;
  white-space: nowrap;
}
.sb {
  width: 22px;
  flex: none;
  display: flex;
}
.sb svg { width: 22px; height: 24px; }
.sb.blue { background: #5f8fc0; }
.s2 { margin-left: 2px; }
.s3 { margin-left: 3px; }
.sc {
  width: 16px;
  flex: none;
  display: flex;
  align-items: center;
  justify-content: center;
}
.scale {
  width: 18px;
  margin-left: 3px;
  color: #e4e4e4;
  font: 11px/24px "Noto Sans", sans-serif;
  text-align: center;
}
</style>
